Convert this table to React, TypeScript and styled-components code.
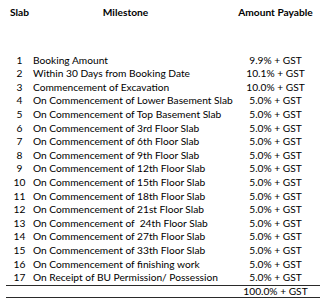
import React from 'react';
import styled, { createGlobalStyle } from 'styled-components';

const GlobalStyle = createGlobalStyle`
  html, body {
    margin: 0;
    padding: 0;
    background: #ffffff;
  }
  body {
    font-family: Lato, "Liberation Sans", sans-serif;
    color: #000000;
  }
`;

const Sheet = styled.div`
  width: 314px;
  padding: 6px 3px 0 6px;
  font-size: 10.2px;
`;

const Grid = styled.div`
  display: grid;
  grid-template-columns: 27px 198px 89px;
  line-height: 13.6px;
`;

const HeadCell = styled.div<{ $shift?: number }>`
  font-weight: 700;
  text-align: center;
  padding-right: ${(p) => p.$shift ?? 0}px;
  margin-bottom: 34px;
`;

const SlabCell = styled.div`
  text-align: center;
`;

const MilestoneCell = styled.div`
  white-space: pre;
`;

const AmountCell = styled.div`
  text-align: center;
`;

const TotalRow = styled.div`
  display: grid;
  grid-template-columns: 225px 89px;
  border-top: 1.5px solid #2a2a2a;
  border-bottom: 1.5px solid #2a2a2a;
  line-height: 11px;
`;

const rows: [string, string][] = [
  ['Booking Amount', '9.9% + GST'],
  ['Within 30 Days from Booking Date', '10.1% + GST'],
  ['Commencement of Excavation', '10.0% + GST'],
  ['On Commencement of Lower Basement Slab', '5.0% + GST'],
  ['On Commencement of Top Basement Slab', '5.0% + GST'],
  ['On Commencement of 3rd Floor Slab', '5.0% + GST'],
  ['On Commencement of 6th Floor Slab', '5.0% + GST'],
  ['On Commencement of 9th Floor Slab', '5.0% + GST'],
  ['On Commencement of 12th Floor Slab', '5.0% + GST'],
  ['On Commencement of 15th Floor Slab', '5.0% + GST'],
  ['On Commencement of 18th Floor Slab', '5.0% + GST'],
  ['On Commencement of 21st Floor Slab', '5.0% + GST'],
  ['On Commencement of  24th Floor Slab', '5.0% + GST'],
  ['On Commencement of 27th Floor Slab', '5.0% + GST'],
  ['On Commencement of 33th Floor Slab', '5.0% + GST'],
  ['On Commencement of finishing work', '5.0% + GST'],
  ['On Receipt of BU Permission/ Possession', '5.0% + GST'],
];

const App: React.FC = () => {
  return (
    <Sheet>
      <GlobalStyle />
      <Grid>
        <HeadCell>Slab</HeadCell>
        <HeadCell $shift={13}>Milestone</HeadCell>
        <HeadCell>Amount Payable</HeadCell>
        {rows.map(([milestone, amount], i) => (
          <React.Fragment key={i}>
            <SlabCell>{i + 1}</SlabCell>
            <MilestoneCell>{milestone}</MilestoneCell>
            <AmountCell>{amount}</AmountCell>
          </React.Fragment>
        ))}
      </Grid>
      <TotalRow>
        <div />
        <AmountCell>100.0% + GST</AmountCell>
      </TotalRow>
    </Sheet>
  );
};

export default App;
